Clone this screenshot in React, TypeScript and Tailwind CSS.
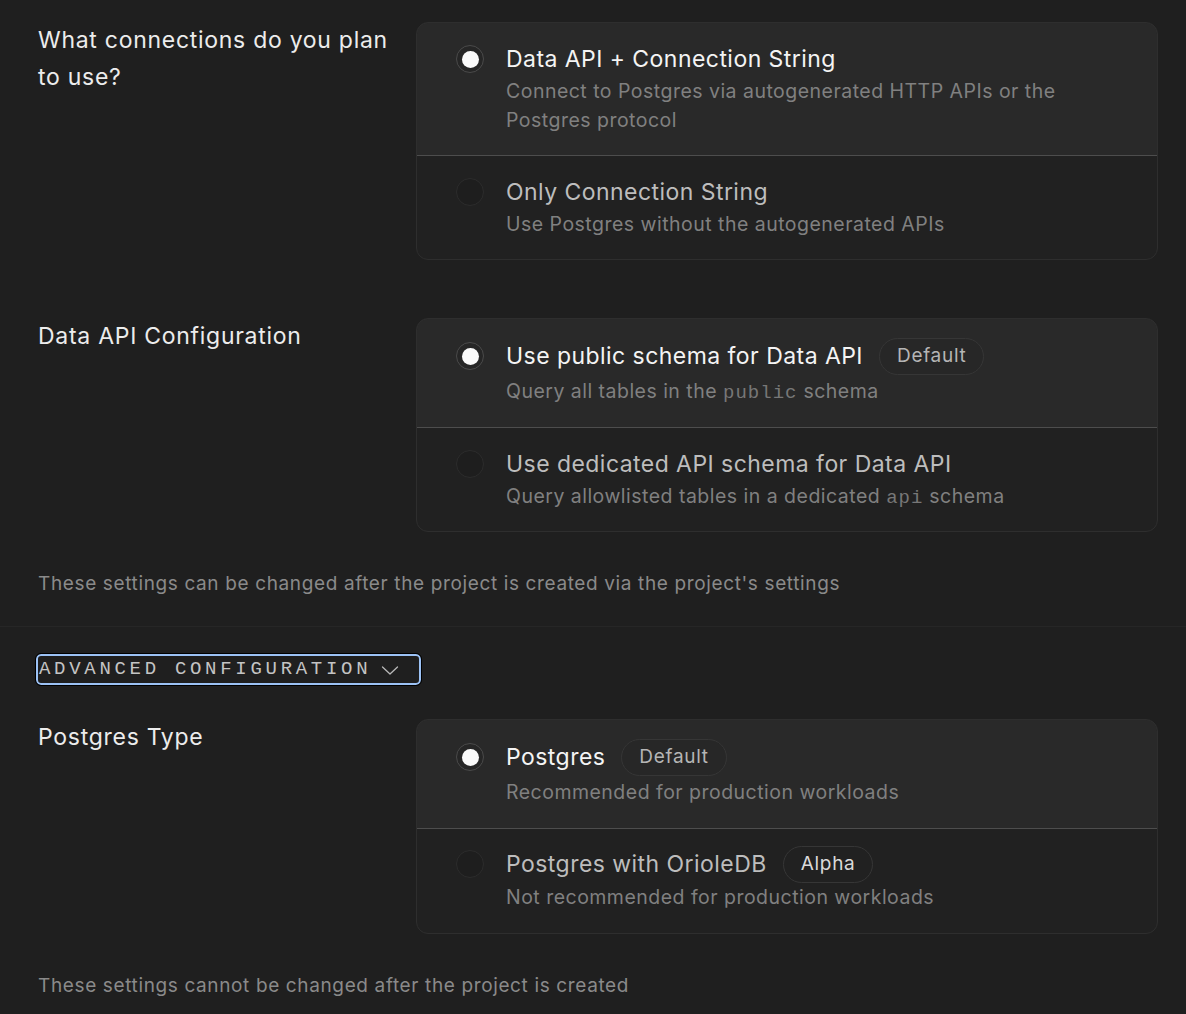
import React from 'react'

interface OptionProps {
    title: string
    description: React.ReactNode
    badge?: string
    selected?: boolean
    first?: boolean
}

const Code = ({ children }: { children: React.ReactNode }) => (
    <code className="font-['Liberation_Mono',monospace] text-[19px] leading-none tracking-[1px] text-[#777777]">{children}</code>
)

const Option = ({ title, description, badge, selected, first }: OptionProps) => {
    // badge rows are taller, the unselected one sits a bit tighter
    const pad = badge ? (selected ? 'pt-[19px] pb-[21px]' : 'pt-[17px] pb-[21px]') : 'pt-[22px] pb-[20px]'
    const gap = badge ? (selected ? 'gap-[3px]' : 'gap-[1px]') : 'gap-[4px]'
    return (
        <label
            className={
                selected
                    ? 'flex cursor-pointer items-start gap-[22px] border border-[#3c3c3c] border-b-[#4d4d4d] bg-[#292929] px-[39px] ' +
                      (first ? '-m-px mb-0 rounded-t-xl ' : '-mx-px ') +
                      pad
                    : 'flex cursor-pointer items-start gap-[22px] px-[39px] ' + pad
            }
        >
            <div className={badge ? 'flex h-[36px] items-center' : 'flex h-[28px] items-center'}>
                {selected ? (
                    <span className="flex h-[28px] w-[28px] items-center justify-center rounded-full border border-[#4a4a4a] bg-[#262626]">
                        <span className="h-[17px] w-[17px] rounded-full bg-[#fafafa]" />
                    </span>
                ) : (
                    <span className="h-[28px] w-[28px] rounded-full border border-[#2c2c2c] bg-[#1e1e1e]" />
                )}
            </div>
            <div className={'flex flex-col ' + gap}>
                <div className={badge ? 'flex h-[36px] items-center gap-[16px]' : 'flex h-[28px] items-center'}>
                    <span className={'text-[23px] leading-[28px] tracking-[0.45px] ' + (selected ? 'text-[#f4f4f4]' : 'text-[#bdbdbd]')}>{title}</span>
                    {badge && (
                        <span
                            className={
                                'flex h-[37px] items-center rounded-full border border-[#363636] px-[17px] text-[19px] tracking-[0.7px] ' +
                                (badge === 'Alpha' ? 'bg-[#212121] text-[#dadada]' : 'bg-[#272727] text-[#b5b5b5]')
                            }
                        >
                            {badge}
                        </span>
                    )}
                </div>
                <p className="text-[19.5px] leading-[29px] tracking-[0.48px] text-[#808080]">{description}</p>
            </div>
        </label>
    )
}

const Row = ({ label, children }: { label: string; children: React.ReactNode }) => (
    <div className="grid grid-cols-[354px_1fr] gap-x-[24px]">
        <p className="text-[23px] leading-[37px] tracking-[0.72px] text-[#ececec]">{label}</p>
        <div className="overflow-hidden rounded-xl border border-[#2e2e2e] bg-[#212121]">{children}</div>
    </div>
)

const App = () => {
    return (
        <div className="min-h-screen bg-[#1f1f1f] font-['Inter','Liberation_Sans',sans-serif]">
            <section className="pr-[28px] pl-[38px] pt-[22px] pb-[28px]">
                <Row label="What connections do you plan to use?">
                    <Option
                        first
                        selected
                        title="Data API + Connection String"
                        description="Connect to Postgres via autogenerated HTTP APIs or the Postgres protocol"
                    />
                    <Option title="Only Connection String" description="Use Postgres without the autogenerated APIs" />
                </Row>
                <div className="mt-[58px]">
                    <Row label="Data API Configuration">
                        <Option
                            first
                            selected
                            badge="Default"
                            title="Use public schema for Data API"
                            description={
                                <>
                                    Query all tables in the <Code>public</Code> schema
                                </>
                            }
                        />
                        <Option
                            title="Use dedicated API schema for Data API"
                            description={
                                <>
                                    Query allowlisted tables in a dedicated <Code>api</Code> schema
                                </>
                            }
                        />
                    </Row>
                </div>
                <p className="mt-[38px] text-[19px] leading-[28px] tracking-[0.63px] text-[#8a8a8a]">
                    These settings can be changed after the project is created via the project's settings
                </p>
            </section>
            <div className="border-t border-[#262626]" />
            <section className="pr-[28px] pl-[38px] pt-[27px] pb-[20px]">
                <button className="-ml-[2px] flex h-[31px] items-center rounded-[5px] border-2 border-[#9cc2f5] pr-[20px] pl-[1px] font-['Liberation_Mono',monospace] text-[19px] tracking-[3.7px] text-[#c4c4c4] outline outline-1 outline-black">
                    ADVANCED CONFIGURATION
                    <svg className="ml-[10px]" width="18" height="12" viewBox="0 0 18 12" fill="none" stroke="#b8b8b8" strokeWidth="1.3" strokeLinecap="round" strokeLinejoin="round">
                        <path d="M1.5 3l7.5 7 7.5-7" />
                    </svg>
                </button>
                <div className="mt-[34px]">
                    <Row label="Postgres Type">
                        <Option first selected badge="Default" title="Postgres" description="Recommended for production workloads" />
                        <Option badge="Alpha" title="Postgres with OrioleDB" description="Not recommended for production workloads" />
                    </Row>
                </div>
                <p className="mt-[38px] text-[19px] leading-[28px] tracking-[0.63px] text-[#8a8a8a]">These settings cannot be changed after the project is created</p>
            </section>
        </div>
    )
}

export default App
